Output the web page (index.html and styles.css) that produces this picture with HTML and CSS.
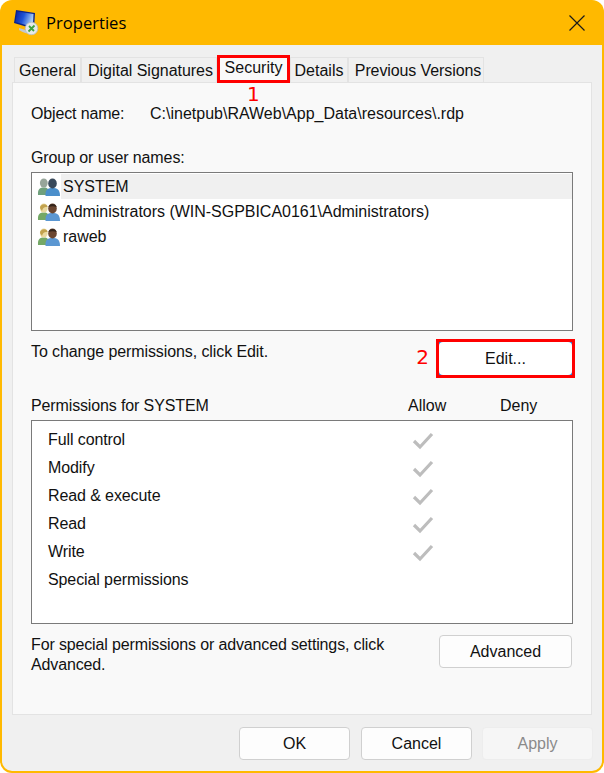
FILE: index.html
```html
<!DOCTYPE html>
<html lang="en">
<head>
  <meta charset="UTF-8">
  <title>Properties</title>
  <link rel="stylesheet" href="styles.css">
</head>
<body>

  <div class="window">
    <div class="titlebar">
      <svg class="app-icon" width="26" height="27" viewBox="0 0 26 27">
        <defs>
          <linearGradient id="screen" x1="0" y1="0" x2="1" y2="0.3">
            <stop offset="0" stop-color="#0a1f9e"/>
            <stop offset="0.5" stop-color="#1f55d8"/>
            <stop offset="1" stop-color="#a9cdf4"/>
          </linearGradient>
        </defs>
        <path d="M5 19 L18 23 L18 25 Q11 25 5 21 Z" fill="#c3c8ce"/>
        <path d="M2 1 L21 4 L20 20 L0 14 Z" fill="#0c2487"/>
        <path d="M3 2.500 L19.500 5 L18.800 18 L1.500 13 Z" fill="url(#screen)"/>
        <circle cx="17.500" cy="19.500" r="6.300" fill="#e6e9ea"/>
        <circle cx="17.500" cy="19.500" r="6.300" fill="none" stroke="#b4bcc0" stroke-width="0.8"/>
        <path d="M14.500 22.500 L20.500 16.500 M15 17 L20 22" stroke="#3ea23f" stroke-width="1.800" fill="none"/>
      </svg>
      <span class="title">Properties</span>
      <svg class="close" width="16" height="16" viewBox="0 0 16 16">
        <path d="M0.500 0.500 L15.500 15.500 M15.500 0.500 L0.500 15.500" stroke="#1a1a1a" stroke-width="1.200" fill="none"/>
      </svg>
    </div>

    <div class="body">
      <div class="tabs">
        <div class="tab tab-general">General</div>
        <div class="tab tab-digital">Digital Signatures</div>
        <div class="tab tab-security">Security</div>
        <div class="tab tab-details">Details</div>
        <div class="tab tab-previous">Previous Versions</div>
        <span class="mark-one">1</span>
      </div>

      <div class="panel">
        <div class="object-row">
          <span class="object-label">Object name:</span>
          <span>C:\inetpub\RAWeb\App_Data\resources\.rdp</span>
        </div>

        <div class="group-label">Group or user names:</div>
        <div class="listbox users">
          <div class="user selected">
            <svg class="user-icon" width="24" height="20" viewBox="0 0 24 20"><use href="#people-grey"/></svg>
            <span class="user-name">SYSTEM</span>
          </div>
          <div class="user">
            <svg class="user-icon" width="24" height="20" viewBox="0 0 24 20"><use href="#people"/></svg>
            <span class="user-name">Administrators (WIN-SGPBICA0161\Administrators)</span>
          </div>
          <div class="user">
            <svg class="user-icon" width="24" height="20" viewBox="0 0 24 20"><use href="#people"/></svg>
            <span class="user-name">raweb</span>
          </div>
        </div>

        <div class="edit-row">
          <span class="edit-text">To change permissions, click Edit.</span>
          <span class="mark-two">2</span>
          <div class="edit-outline"><button class="btn btn-edit">Edit...</button></div>
        </div>

        <div class="perm-head">
          <span class="perm-title">Permissions for SYSTEM</span>
          <span class="perm-allow">Allow</span>
          <span class="perm-deny">Deny</span>
        </div>
        <div class="listbox perms">
          <div class="perm"><span class="perm-name">Full control</span><svg class="check" width="24" height="20" viewBox="0 0 24 20"><use href="#tick"/></svg></div>
          <div class="perm"><span class="perm-name">Modify</span><svg class="check" width="24" height="20" viewBox="0 0 24 20"><use href="#tick"/></svg></div>
          <div class="perm"><span class="perm-name">Read &amp; execute</span><svg class="check" width="24" height="20" viewBox="0 0 24 20"><use href="#tick"/></svg></div>
          <div class="perm"><span class="perm-name">Read</span><svg class="check" width="24" height="20" viewBox="0 0 24 20"><use href="#tick"/></svg></div>
          <div class="perm"><span class="perm-name">Write</span><svg class="check" width="24" height="20" viewBox="0 0 24 20"><use href="#tick"/></svg></div>
          <div class="perm"><span class="perm-name">Special permissions</span></div>
        </div>

        <div class="advanced-row">
          <span class="advanced-text">For special permissions or advanced settings, click Advanced.</span>
          <button class="btn btn-advanced">Advanced</button>
        </div>
      </div>

      <div class="footer">
        <button class="btn btn-footer">OK</button>
        <button class="btn btn-footer">Cancel</button>
        <button class="btn btn-footer btn-disabled">Apply</button>
      </div>
    </div>
  </div>

  <svg class="defs" width="0" height="0">
    <defs>
      <g id="people">
        <path d="M1 18 C0.500 12 3 10.500 7 10.500 C10.500 10.500 12 12 12 18 Z" fill="#74a866"/>
        <ellipse cx="6.800" cy="6" rx="3.900" ry="4.600" fill="#ead9a0"/>
        <path d="M3 6 C3 1.500 10.500 1 10.500 5 C8 5 6 5 5 9 Z" fill="#c2a24e"/>
        <path d="M8.500 19 C8 12.500 11 11 15.500 11 C20 11 23 12.500 23 19 Z" fill="#5b97d2"/>
        <ellipse cx="15.500" cy="6.500" rx="4.300" ry="5" fill="#6b4630"/>
        <path d="M11.500 5 C12 1 19 1 19.600 5 C17 4 14 4 11.500 5 Z" fill="#33241b"/>
      </g>
      <g id="people-grey">
        <path d="M1 18 C0.500 12 3 10.500 7 10.500 C10.500 10.500 12 12 12 18 Z" fill="#6fa07c"/>
        <ellipse cx="6.800" cy="6" rx="3.900" ry="4.600" fill="#97a59a"/>
        <path d="M8.500 19 C8 12.500 11 11 15.500 11 C20 11 23 12.500 23 19 Z" fill="#4b8fcb"/>
        <ellipse cx="15.500" cy="6.500" rx="4.300" ry="5" fill="#39495a"/>
      </g>
      <path id="tick" d="M3 11 L9 17 L21 4" fill="none" stroke="#bdbdbd" stroke-width="3.200"/>
    </defs>
  </svg>

</body>
</html>
```

FILE: styles.css
```css
* {
  box-sizing: border-box;
}

html, body {
  margin: 0;
  background-color: #fff;
}

body {
  width: 604px;
  height: 773px;
  overflow: hidden;
  font-family: 'Liberation Sans', Arial, sans-serif;
  font-size: 16px;
  color: #111;
}

.window {
  width: 604px;
  height: 773px;
  background-color: #ffb900;
  border-radius: 12px;
  padding: 0 2px 2px 2px;
  display: flex;
  flex-direction: column;
}

.titlebar {
  height: 45px;
  display: flex;
  align-items: center;
  padding: 0 17px 0 12px;
  flex-shrink: 0;
}

.app-icon {
  margin-right: 6px;
}

.title {
  font-family: 'Open Sans', sans-serif;
  font-size: 16.6px;
  color: #000;
  flex: 1;
}

.body {
  flex: 1;
  background-color: #f0f0f0;
  border-radius: 0 0 10px 10px;
  padding: 12px 10px 0 10px;
  display: flex;
  flex-direction: column;
}

.tabs {
  display: flex;
  height: 25px;
  padding-left: 2px;
  flex-shrink: 0;
  position: relative;
}

.tab {
  height: 25px;
  background-color: #f0f0f0;
  border: 1px solid #e3e3e3;
  border-bottom: none;
  text-align: center;
  line-height: 25px;
  white-space: nowrap;
}

.tab-general { width: 67px; }
.tab-digital { width: 136px; padding-left: 3px; letter-spacing: -0.03px; }
.tab-details { width: 58px; }
.tab-previous { width: 136px; padding-left: 4px; letter-spacing: -0.1px; }

.tab-security {
  width: 73px;
  height: 28px;
  margin-top: -2px;
  line-height: 20px;
  background-color: #f9f9f9;
  border: 3px solid #f00;
  z-index: 1;
}

/* callout number under the Security tab */
.mark-one {
  position: absolute;
  left: 235px;
  top: 25px;
  font-family: 'DejaVu Sans', sans-serif;
  font-size: 20px;
  line-height: 24px;
  color: #f00;
  z-index: 1;
}

.panel {
  height: 633px;
  background-color: #f9f9f9;
  border: 1px solid #e3e3e3;
  padding: 0 18px;
  flex-shrink: 0;
}

.object-row {
  display: flex;
  height: 20px;
  margin-top: 21px;
  line-height: 20px;
}

.object-label {
  width: 119px;
  letter-spacing: -0.15px;
}

.group-label {
  height: 20px;
  line-height: 20px;
  margin-top: 24px;
  letter-spacing: -0.1px;
}

.listbox {
  background-color: #fff;
  border: 1px solid #7a7a7a;
}

.users {
  height: 159px;
  margin-top: 4px;
  padding: 1px 0 1px 1px;
}

.user {
  height: 25px;
  display: flex;
  align-items: stretch;
  padding-left: 4px;
}

.user-icon {
  flex-shrink: 0;
  align-self: center;
}

.user-name {
  flex: 1;
  padding-left: 2px;
  line-height: 25px;
  letter-spacing: -0.02px;
}

.selected .user-name {
  background-color: #f0f0f0;
}

.edit-row {
  display: flex;
  align-items: center;
  height: 39px;
  margin-top: 8px;
}

.edit-text {
  flex: 1;
  align-self: flex-start;
  margin-top: 3px;
  line-height: 20px;
  letter-spacing: -0.09px;
}

.mark-two {
  font-family: 'DejaVu Sans', sans-serif;
  font-size: 20px;
  color: #f00;
  margin: 0 7px 3px 0;
}

.edit-outline {
  width: 139px;
  height: 39px;
  border: 3px solid #f00;
  background-color: #2a7fd0;
  margin-right: -2px;
}

.btn {
  font-family: 'Liberation Sans', Arial, sans-serif;
  font-size: 16px;
  color: #111;
  background-color: #fdfdfd;
  border: 1px solid #d0d0d0;
  border-radius: 4px;
  padding: 0;
}

.btn-edit {
  display: block;
  width: 100%;
  height: 100%;
  background-color: #fff;
  border: none;
}

.perm-head {
  display: flex;
  height: 20px;
  line-height: 20px;
  margin-top: 18px;
}

.perm-title {
  width: 377px;
  letter-spacing: -0.13px;
}

.perm-allow { width: 92px; }

.listbox.perms {
  height: 204px;
  margin-top: 4px;
  padding: 5px 16px 0 16px;
}

.perm {
  height: 28px;
  display: flex;
  align-items: center;
}

.perm-name {
  width: 363px;
  letter-spacing: -0.1px;
}

.advanced-row {
  display: flex;
  justify-content: space-between;
  margin-top: 11px;
}

.advanced-text {
  width: 390px;
  line-height: 20px;
  letter-spacing: -0.14px;
}

.btn-advanced {
  width: 133px;
  height: 33px;
  margin-right: 1px;
}

.footer {
  display: flex;
  justify-content: flex-end;
  gap: 11px;
  margin-top: 12px;
  margin-right: -1px;
}

.btn-footer {
  width: 111px;
  height: 33px;
}

.btn-disabled {
  margin-left: -1px;
  background-color: #f6f6f6;
  border-color: #ededed;
  color: #8a8a8a;
}

.defs {
  position: absolute;
}
```
